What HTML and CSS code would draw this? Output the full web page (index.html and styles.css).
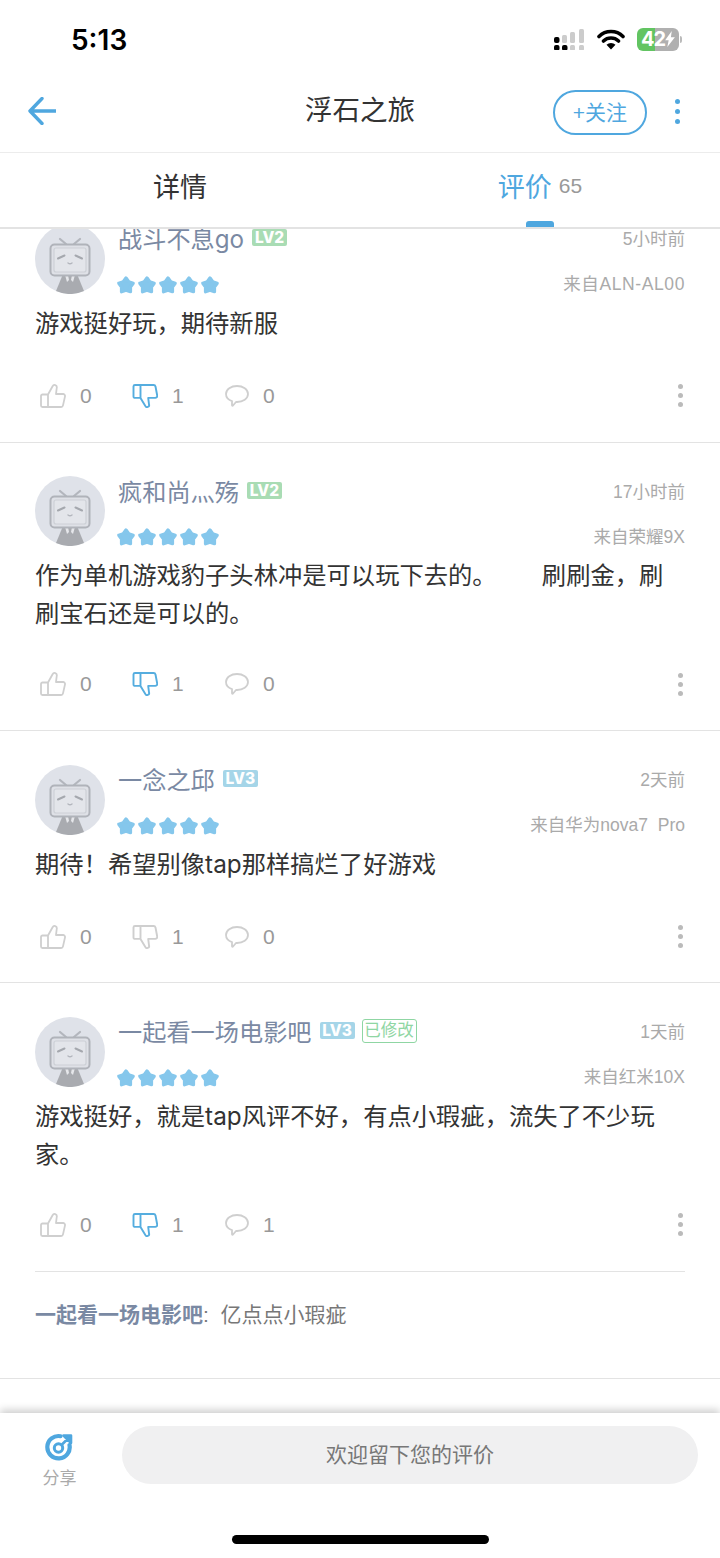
FILE: index.html
```html
<!DOCTYPE html>
<html lang="zh">
<head>
    <meta charset="UTF-8">
    <meta name="viewport" content="width=device-width, initial-scale=1.0">
    <title>浮石之旅</title>
    <link rel="stylesheet" href="styles.css">
</head>
<body>
    <!-- Shared icons -->
    <svg class="sprites" width="0" height="0">
        <symbol id="avatar" viewBox="0 0 70 70">
            <circle cx="35" cy="35" r="35" fill="#dfe2e9"/>
            <path d="M28 50h14l7 17a35 35 0 0 1-28 0z" fill="#a9abb0"/>
            <path d="M30 51h3l1 5-2 2zM40 51h-3l-1 5 2 2z" fill="#e6e7eb"/>
            <path d="M25 15l6 5M45 15l-6 5" stroke="#b3b6bd" stroke-width="2.200" stroke-linecap="round" fill="none"/>
            <rect x="15.500" y="20.500" width="39" height="31" rx="4" fill="#dfe1e7" stroke="#b0b3ba" stroke-width="2"/>
            <rect x="19" y="24" width="32" height="24" rx="2" fill="#e3e5ea" stroke="#cdd0d6" stroke-width="1.200"/>
            <path d="M23 34.500l6.500-3M47 34.500l-6.500-3" stroke="#a5a8ae" stroke-width="2" stroke-linecap="round" fill="none"/>
            <path d="M33 39q2 1.500 4 0" stroke="#b3b6bd" stroke-width="1.400" stroke-linecap="round" fill="none"/>
        </symbol>
        <symbol id="star" viewBox="0 0 18 18">
            <path d="M9 2.700L11.470 6.100 15.470 7.400 13 10.800 13 15 9 13.700 5 15 5 10.800 2.530 7.400 6.530 6.100z" fill="#85c7ec" stroke="#85c7ec" stroke-width="3" stroke-linejoin="round"/>
        </symbol>
        <symbol id="thumb-up" viewBox="0 0 26 24">
            <path d="M8 10.500h-5.500a1.500 1.500 0 0 0-1.500 1.500v9.500a1.500 1.500 0 0 0 1.500 1.500h18.500a2 2 0 0 0 2-1.600l2-9a2 2 0 0 0-2-2.400h-7l.8-6.500a2.200 2.200 0 0 0-4.200-1.200zM8 10.500v12.500" fill="none" stroke="#cfcfcf" stroke-width="1.800" stroke-linejoin="round"/>
        </symbol>
        <symbol id="thumb-down" viewBox="0 0 26 24">
            <path d="M8.500 1h13a2 2 0 0 1 2 1.500l1.700 9a2 2 0 0 1-2 2.400h-7l.8 6.500a2 2 0 0 1-3.800 1.300l-4.700-7.800h-5.500a1.500 1.500 0 0 1-1.500-1.500v-10a1.500 1.500 0 0 1 1.500-1.400zM8.500 1v12.900" fill="none" stroke="currentColor" stroke-width="1.900" stroke-linejoin="round"/>
        </symbol>
        <symbol id="bubble" viewBox="0 0 24 22">
            <path d="M12 1c6 0 11 3.400 11 8s-5 8-11 8h-1l-3 3.500c-.6.500-1 .2-1-.5v-3.900c-3.500-1.200-6-3.900-6-7.100 0-4.600 5-8 11-8z" fill="none" stroke="#cfcfcf" stroke-width="1.800" stroke-linejoin="round"/>
        </symbol>
    </svg>

    <div class="status-bar">
        <span class="clock">5:13</span>
        <div class="status-icons">
            <svg class="signal" width="32" height="23" viewBox="0 0 32 23">
                <rect x="2" y="10" width="5.500" height="6" rx="2" fill="#000"/>
                <rect x="2" y="18" width="5.500" height="5.500" rx="2" fill="#000"/>
                <rect x="10" y="18" width="5.500" height="5.500" rx="2" fill="#000"/>
                <rect x="10" y="8" width="5" height="8" rx="1.500" fill="#ccc"/>
                <rect x="18" y="5" width="5" height="11" rx="1.500" fill="#ccc"/>
                <rect x="27" y="2" width="5" height="14" rx="1.500" fill="#ccc"/>
                <rect x="18" y="18" width="5" height="5.500" rx="1.500" fill="#ccc"/>
                <rect x="27" y="18" width="5" height="5.500" rx="1.500" fill="#ccc"/>
            </svg>
            <svg class="wifi" width="28" height="21" viewBox="0 0 28 21">
                <path d="M2 7.500a17 17 0 0 1 24 0M6.500 12a11 11 0 0 1 15 0" fill="none" stroke="#000" stroke-width="3.600" stroke-linecap="round"/>
                <path d="M14 20.500l-4.500-4.800a6.500 6.500 0 0 1 9 0z" fill="#000"/>
            </svg>
            <div class="battery">
                <span class="battery-num">42</span>
                <svg width="10" height="16" viewBox="0 0 11 18"><path d="M7.500 0L0 10.500h4L2.500 18 11 7h-4.500z" fill="#fff"/></svg>
            </div>
        </div>
    </div>

    <div class="nav-bar">
        <svg class="back" width="28" height="28" viewBox="0 0 28 28">
            <path d="M14 1.500L2 14l12 12.500M2.500 14h25" fill="none" stroke="#4fa7df" stroke-width="3.400" stroke-linecap="round" stroke-linejoin="round"/>
        </svg>
        <h1 class="nav-title">浮石之旅</h1>
        <button class="follow-btn">+关注</button>
        <div class="nav-more"><i></i><i></i><i></i></div>
    </div>

    <div class="tabs">
        <div class="tab">详情</div>
        <div class="tab tab-active">评价<span class="tab-count">65</span></div>
    </div>

    <div class="list-wrap">
        <div class="list">
            <div class="card">
                <div class="card-head">
                    <svg class="avatar"><use href="#avatar"/></svg>
                    <div class="head-main">
                        <div class="head-row">
                            <span class="name">战斗不息go</span>
                            <span class="level lv2">LV2</span>
                            <span class="meta">5小时前</span>
                        </div>
                        <div class="head-row row-stars">
                            <div class="stars"><svg><use href="#star"/></svg><svg><use href="#star"/></svg><svg><use href="#star"/></svg><svg><use href="#star"/></svg><svg><use href="#star"/></svg></div>
                            <span class="meta meta-wide">来自ALN-AL00</span>
                        </div>
                    </div>
                </div>
                <p class="content">游戏挺好玩，期待新服</p>
                <div class="actions">
                    <svg class="act-icon"><use href="#thumb-up"/></svg><span class="act-num">0</span>
                    <svg class="act-icon voted"><use href="#thumb-down"/></svg><span class="act-num">1</span>
                    <svg class="act-icon bubble"><use href="#bubble"/></svg><span class="act-num">0</span>
                    <div class="card-more"><i></i><i></i><i></i></div>
                </div>
            </div>

            <div class="card">
                <div class="card-head">
                    <svg class="avatar"><use href="#avatar"/></svg>
                    <div class="head-main">
                        <div class="head-row">
                            <span class="name">疯和尚灬殇</span>
                            <span class="level lv2">LV2</span>
                            <span class="meta">17小时前</span>
                        </div>
                        <div class="head-row row-stars">
                            <div class="stars"><svg><use href="#star"/></svg><svg><use href="#star"/></svg><svg><use href="#star"/></svg><svg><use href="#star"/></svg><svg><use href="#star"/></svg></div>
                            <span class="meta">来自荣耀9X</span>
                        </div>
                    </div>
                </div>
                <p class="content">作为单机游戏豹子头林冲是可以玩下去的。&nbsp;&nbsp;&nbsp;&nbsp;&nbsp;&nbsp;刷刷金，刷刷宝石还是可以的。</p>
                <div class="actions">
                    <svg class="act-icon"><use href="#thumb-up"/></svg><span class="act-num">0</span>
                    <svg class="act-icon voted"><use href="#thumb-down"/></svg><span class="act-num">1</span>
                    <svg class="act-icon bubble"><use href="#bubble"/></svg><span class="act-num">0</span>
                    <div class="card-more"><i></i><i></i><i></i></div>
                </div>
            </div>

            <div class="card">
                <div class="card-head">
                    <svg class="avatar"><use href="#avatar"/></svg>
                    <div class="head-main">
                        <div class="head-row">
                            <span class="name">一念之邱</span>
                            <span class="level lv3">LV3</span>
                            <span class="meta">2天前</span>
                        </div>
                        <div class="head-row row-stars">
                            <div class="stars"><svg><use href="#star"/></svg><svg><use href="#star"/></svg><svg><use href="#star"/></svg><svg><use href="#star"/></svg><svg><use href="#star"/></svg></div>
                            <span class="meta">来自华为nova7&nbsp; Pro</span>
                        </div>
                    </div>
                </div>
                <p class="content">期待！希望别像tap那样搞烂了好游戏</p>
                <div class="actions">
                    <svg class="act-icon"><use href="#thumb-up"/></svg><span class="act-num">0</span>
                    <svg class="act-icon"><use href="#thumb-down"/></svg><span class="act-num">1</span>
                    <svg class="act-icon bubble"><use href="#bubble"/></svg><span class="act-num">0</span>
                    <div class="card-more"><i></i><i></i><i></i></div>
                </div>
            </div>

            <div class="card">
                <div class="card-head">
                    <svg class="avatar"><use href="#avatar"/></svg>
                    <div class="head-main">
                        <div class="head-row">
                            <span class="name">一起看一场电影吧</span>
                            <span class="level lv3">LV3</span>
                            <span class="edited">已修改</span>
                            <span class="meta">1天前</span>
                        </div>
                        <div class="head-row row-stars">
                            <div class="stars"><svg><use href="#star"/></svg><svg><use href="#star"/></svg><svg><use href="#star"/></svg><svg><use href="#star"/></svg><svg><use href="#star"/></svg></div>
                            <span class="meta">来自红米10X</span>
                        </div>
                    </div>
                </div>
                <p class="content">游戏挺好，就是tap风评不好，有点小瑕疵，流失了不少玩家。</p>
                <div class="actions">
                    <svg class="act-icon"><use href="#thumb-up"/></svg><span class="act-num">0</span>
                    <svg class="act-icon voted"><use href="#thumb-down"/></svg><span class="act-num">1</span>
                    <svg class="act-icon bubble"><use href="#bubble"/></svg><span class="act-num">1</span>
                    <div class="card-more"><i></i><i></i><i></i></div>
                </div>
                <div class="reply"><b>一起看一场电影吧</b>:&nbsp; 亿点点小瑕疵</div>
            </div>

            <div class="card">
                <div class="card-head">
                    <svg class="avatar"><use href="#avatar"/></svg>
                </div>
            </div>
        </div>
    </div>

    <div class="footer">
        <div class="share">
            <svg width="30" height="30" viewBox="0 0 30 30">
                <path d="M24.500 13a11.200 11.200 0 1 1-9-8.800" fill="none" stroke="#4fa7df" stroke-width="4.200" stroke-linecap="round"/>
                <circle cx="13.500" cy="16" r="4.200" fill="none" stroke="#4fa7df" stroke-width="3"/>
                <path d="M16.500 13l8-8M18.500 3.500h7.500v7.500z" fill="#4fa7df" stroke="#4fa7df" stroke-width="2.600" stroke-linejoin="round"/>
            </svg>
            <span>分享</span>
        </div>
        <div class="comment-input">欢迎留下您的评价</div>
    </div>
    <div class="home-area"><div class="home-bar"></div></div>
</body>
</html>
```

FILE: styles.css
```css
* {
    box-sizing: border-box;
}

body {
    margin: 0;
    width: 720px;
    height: 1558px;
    display: flex;
    flex-direction: column;
    overflow: hidden;
    background-color: #fff;
    font-family: "Liberation Sans", "Noto Sans CJK SC", sans-serif;
}

.sprites {
    position: absolute;
}

/* Status bar */
.status-bar {
    height: 78px;
    flex: none;
    display: flex;
    align-items: center;
    justify-content: space-between;
    padding: 0 41px 0 71px;
}

.clock {
    margin-top: 2px;
    font-family: Inter, sans-serif;
    font-size: 28px;
    font-weight: 600;
    color: #000;
}

.status-icons {
    display: flex;
    align-items: center;
    gap: 12px;
}

.signal {
    margin-top: -2px;
    margin-right: 1px;
}

.battery {
    position: relative;
    width: 42px;
    height: 23px;
    display: flex;
    align-items: center;
    padding-left: 4px;
    border-radius: 6px;
    background: linear-gradient(to right, #62c462 18px, #b0b0b0 18px);
}

.battery::after {
    content: "";
    position: absolute;
    right: -3px;
    top: 8px;
    width: 2px;
    height: 7px;
    border-radius: 0 2px 2px 0;
    background-color: #bbb;
}

.battery-num {
    font-family: Inter, sans-serif;
    font-size: 20px;
    font-weight: 700;
    letter-spacing: -1px;
    color: #fff;
}

/* Title bar */
.nav-bar {
    position: relative;
    height: 75px;
    flex: none;
    display: flex;
    align-items: center;
    padding: 0 40px 8px 28px;
    border-bottom: 1px solid #ececec;
}

.nav-title {
    position: absolute;
    left: 0;
    right: 0;
    top: 14px;
    margin: 0;
    text-align: center;
    font-size: 27.500px;
    line-height: 38px;
    font-weight: 400;
    color: #333;
}

.follow-btn {
    margin-left: auto;
    margin-top: 2px;
    width: 94px;
    height: 45px;
    padding: 0 0 3px;
    border: 2px solid #4fa7df;
    border-radius: 23px;
    background: none;
    font-family: inherit;
    font-size: 21px;
    color: #4fa7df;
}

.nav-more {
    margin-left: 28px;
    margin-top: 1px;
    display: flex;
    flex-direction: column;
    gap: 5px;
}

.nav-more i {
    width: 5px;
    height: 5px;
    border-radius: 50%;
    background-color: #4fa7df;
}

/* Tabs */
.tabs {
    height: 76px;
    flex: none;
    display: grid;
    grid-template-columns: 1fr 1fr;
    border-bottom: 2px solid #e3e3e3;
}

.tab {
    position: relative;
    display: flex;
    align-items: center;
    justify-content: center;
    padding-bottom: 9px;
    font-size: 27px;
    color: #333;
}

.tab-active {
    color: #4fa7df;
}

.tab-count {
    margin-left: 7px;
    font-size: 21px;
    color: #999;
}

.tab-active::after {
    content: "";
    position: absolute;
    left: 166px;
    bottom: 0;
    width: 28px;
    height: 6px;
    border-radius: 3px 3px 0 0;
    background-color: #4fa7df;
}

/* Comment list */
.list-wrap {
    flex: 1;
    min-height: 0;
    overflow: hidden;
}

.list {
    margin-top: -38.600px;
}

.card {
    padding: 33.500px 35px 0;
    border-bottom: 1px solid #e3e3e3;
}

.card-head {
    display: flex;
    gap: 13px;
    height: 70px;
}

.avatar {
    width: 70px;
    height: 70px;
    flex: none;
}

.head-main {
    flex: 1;
    min-width: 0;
}

.head-row {
    display: flex;
    align-items: center;
    height: 28px;
}

.row-stars {
    margin-top: 19px;
    justify-content: space-between;
}

.name {
    font-family: Inter, "Noto Sans CJK SC", sans-serif;
    font-size: 24.200px;
    color: #7a89a3;
}

.level {
    margin-left: 8px;
    width: 35px;
    height: 17px;
    border-radius: 2px;
    text-align: center;
    font-family: Inter, sans-serif;
    font-size: 15.500px;
    line-height: 17px;
    font-weight: 800;
    color: #fff;
    overflow: hidden;
}

.lv2 {
    background-color: #a9dcb4;
}

.lv3 {
    background-color: #a5d5e8;
}

.edited {
    margin-left: 7px;
    width: 55px;
    height: 24px;
    border: 1px solid #8fd6a3;
    border-radius: 3px;
    text-align: center;
    font-size: 16.500px;
    line-height: 21px;
    color: #8fd6a3;
}

.meta {
    margin-left: auto;
    font-size: 17.500px;
    color: #aaa;
}

.row-stars .meta {
    margin-bottom: 4px;
}

.meta-wide {
    letter-spacing: 0.6px;
}

.stars {
    display: flex;
    gap: 1px;
    margin-left: -2px;
}

.stars svg {
    width: 20px;
    height: 20px;
}

.content {
    margin: 10px 0 0;
    min-height: 40px;
    font-family: Inter, "Noto Sans CJK SC", sans-serif;
    font-size: 24.300px;
    line-height: 38px;
    word-spacing: 0.700px;
    color: #333;
}

.actions {
    display: flex;
    align-items: center;
    height: 40px;
    margin-top: 32px;
    margin-bottom: 25.800px;
    padding-left: 5px;
}

.act-icon {
    width: 26px;
    height: 24px;
    flex: none;
    color: #cfcfcf;
}

.voted {
    color: #55addf;
}

.bubble {
    width: 24px;
    height: 22px;
    margin-left: 1px;
}

.act-num {
    width: 66px;
    padding-left: 14px;
    font-size: 21px;
    color: #999;
}

.card-more {
    margin-left: auto;
    margin-right: 2px;
    display: flex;
    flex-direction: column;
    gap: 4px;
}

.card-more i {
    width: 5px;
    height: 5px;
    border-radius: 50%;
    background-color: #bbb;
}

.reply {
    padding: 28px 0 48.700px;
    border-top: 1px solid #e3e3e3;
    font-size: 21px;
    line-height: 30px;
    color: #777;
}

.reply b {
    color: #7a89a3;
}

/* Bottom bar */
.footer {
    position: relative;
    height: 87px;
    flex: none;
    display: flex;
    padding: 13px 22px 0 0;
    background-color: #fff;
    box-shadow: 0 -3px 8px rgba(0, 0, 0, 0.2);
}

.share {
    width: 122px;
    padding: 6px 5px 0 2px;
    display: flex;
    flex-direction: column;
    align-items: center;
    gap: 2px;
    font-size: 17px;
    color: #aaa;
}

.comment-input {
    flex: 1;
    height: 58px;
    border-radius: 29px;
    background-color: #f0f0f1;
    text-align: center;
    font-size: 21px;
    line-height: 58px;
    color: #777;
}

.home-area {
    position: relative;
    height: 58px;
    flex: none;
    padding-top: 35px;
    background-color: #fff;
}

.home-bar {
    width: 257px;
    height: 9px;
    margin: 0 auto;
    border-radius: 5px;
    background-color: #000;
}
```
